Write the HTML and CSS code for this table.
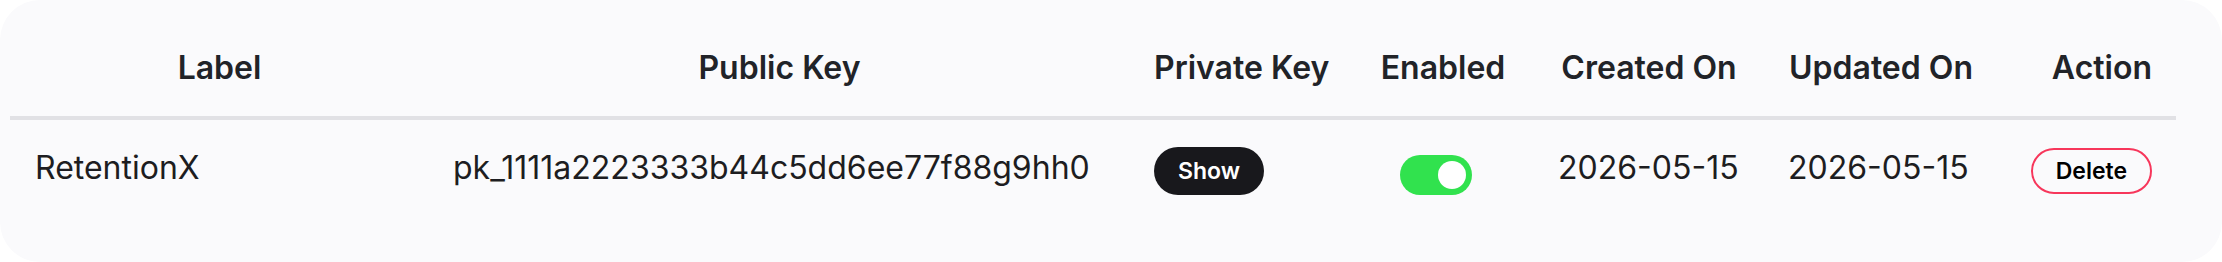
FILE: index.html
```html
<!DOCTYPE html>
<html lang="en">
<head>
    <meta charset="UTF-8">
    <meta name="viewport" content="width=device-width, initial-scale=1.0">
    <title>API Keys</title>
    <link rel="stylesheet" href="styles.css">
</head>
<body>
    <div class="card">
        <table class="keys-table">
            <colgroup>
                <col class="col-label">
                <col class="col-public">
                <col class="col-private">
                <col class="col-enabled">
                <col class="col-created">
                <col class="col-updated">
                <col class="col-action">
            </colgroup>
            <thead>
                <tr>
                    <th>Label</th>
                    <th>Public Key</th>
                    <th>Private Key</th>
                    <th>Enabled</th>
                    <th>Created On</th>
                    <th>Updated On</th>
                    <th class="align-right">Action</th>
                </tr>
            </thead>
            <tbody>
                <tr>
                    <td>RetentionX</td>
                    <td>pk_1111a2223333b44c5dd6ee77f88g9hh0</td>
                    <td><button class="show-button">Show</button></td>
                    <td><span class="toggle is-on"><span class="toggle-knob"></span></span></td>
                    <td>2026-05-15</td>
                    <td>2026-05-15</td>
                    <td class="align-right"><button class="delete-button">Delete</button></td>
                </tr>
            </tbody>
        </table>
    </div>
</body>
</html>
```

FILE: styles.css
```css
* {
    margin: 0;
    padding: 0;
    box-sizing: border-box;
}

body {
    font-family: Inter, "Noto Sans", Arial, sans-serif;
    background-color: #ffffff;
}

.card {
    height: 262px;
    padding: 18px 46px 0 10px;
    background-color: #fafafc;
    border-radius: 40px;
    overflow: hidden;
}

.keys-table {
    width: 100%;
    table-layout: fixed;
    border-collapse: collapse;
}

.col-label { width: 419px; }
.col-public { width: 701px; }
.col-private { width: 222px; }
.col-enabled { width: 182px; }
.col-created { width: 230px; }
.col-updated { width: 234px; }
.col-action { width: 178px; }

th {
    padding: 30px 24px 29px;
    font-size: 32px;
    line-height: 39px;
    font-weight: 600;
    color: #212328;
    text-align: center;
    white-space: nowrap;
    border-bottom: 4px solid #e1e1e5;
}

td {
    padding: 27px 24px 20px;
    font-size: 32px;
    line-height: 39px;
    color: #1d1d21;
    text-align: left;
    vertical-align: baseline;
    white-space: nowrap;
}

td:first-child {
    padding-left: 25px;
}

.align-right {
    text-align: right;
}

.show-button,
.delete-button {
    display: inline-block;
    font-family: inherit;
    font-size: 23px;
    line-height: 28px;
    font-weight: 600;
    border-radius: 999px;
    cursor: pointer;
}

.show-button {
    padding: 10px 24px;
    background-color: #18181c;
    color: white;
    border: none;
}

.delete-button {
    padding: 7px 23px;
    background-color: transparent;
    color: #000;
    border: 2px solid #f7365b;
}

.toggle {
    display: inline-block;
    position: relative;
    width: 72px;
    height: 40px;
    margin-left: 24px;
    border-radius: 20px;
    background-color: #d4d4d8;
    vertical-align: -16px;
}

.toggle.is-on {
    background-color: #31e24e;
}

.toggle-knob {
    position: absolute;
    top: 6px;
    right: 6px;
    width: 28px;
    height: 28px;
    border-radius: 50%;
    background-color: white;
}
```
